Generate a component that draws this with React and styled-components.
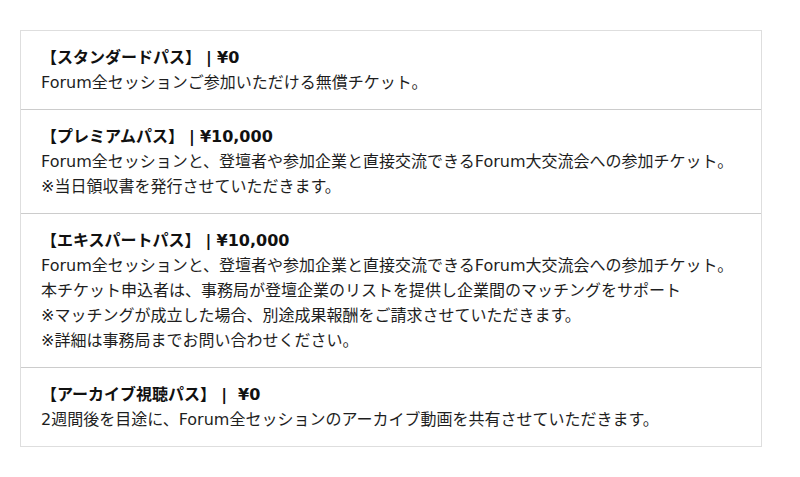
import React from "react";
import styled, { createGlobalStyle } from "styled-components";

const Global = createGlobalStyle`
  html, body { margin: 0; padding: 0; background: #fff; }
  body { font-family: "DejaVu Sans", "Noto Sans CJK JP", sans-serif; }
`;

const List = styled.div`
  box-sizing: border-box;
  width: 742px;
  margin: 30px 0 0 20px;
  border: 1px solid #dedede;
  display: flex;
  flex-direction: column;
`;

const Item = styled.div`
  padding: 14px 20px;
  border-top: ${(p) => (p.$first ? "none" : "1px solid #cccccc")};
  font-size: 16px;
  line-height: 25px;
  color: #1e1e1e;
`;

const Title = styled.div`
  font-weight: bold;
  color: #111;
`;

const Sep = styled.span`
  display: inline-block;
  width: 16px;
  text-align: center;
  font-family: "DejaVu Sans", sans-serif;
  font-weight: bold;
  margin-right: ${(p) => (p.$spaced ? "6px" : "0")};
`;

const Line = styled.div``;

const items = [
  {
    name: "【スタンダードパス】",
    price: "¥0",
    lines: ["Forum全セッションご参加いただける無償チケット。"],
  },
  {
    name: "【プレミアムパス】",
    price: "¥10,000",
    lines: [
      "Forum全セッションと、登壇者や参加企業と直接交流できるForum大交流会への参加チケット。",
      "※当日領収書を発行させていただきます。",
    ],
  },
  {
    name: "【エキスパートパス】",
    price: "¥10,000",
    lines: [
      "Forum全セッションと、登壇者や参加企業と直接交流できるForum大交流会への参加チケット。",
      "本チケット申込者は、事務局が登壇企業のリストを提供し企業間のマッチングをサポート",
      "※マッチングが成立した場合、別途成果報酬をご請求させていただきます。",
      "※詳細は事務局までお問い合わせください。",
    ],
  },
  {
    name: "【アーカイブ視聴パス】",
    price: "¥0",
    spaced: true,
    lines: ["2週間後を目途に、Forum全セッションのアーカイブ動画を共有させていただきます。"],
  },
];

export default function App() {
  return (
    <>
      <Global />
      <List>
        {items.map((it, i) => (
          <Item key={i} $first={i === 0}>
            <Title>
              {it.name}
              <Sep $spaced={it.spaced}>|</Sep>
              {it.price}
            </Title>
            {it.lines.map((l, j) => (
              <Line key={j}>{l}</Line>
            ))}
          </Item>
        ))}
      </List>
    </>
  );
}
